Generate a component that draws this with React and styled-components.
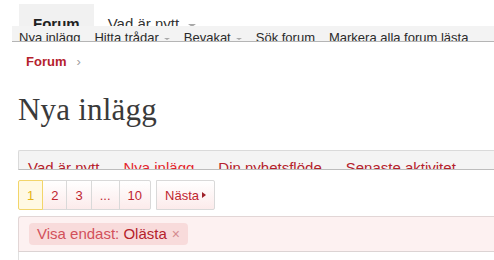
import React from 'react'
import styled, { createGlobalStyle } from 'styled-components'

const Global = createGlobalStyle`
  body {
    margin: 0;
    background: #fff;
    font-family: "Liberation Sans", Arial, sans-serif;
  }
`

const TopRow = styled.div`
  display: flex;
  align-items: flex-end;
  height: 26px;
  padding-left: 19px;
`
const TopTab = styled.div`
  height: 22px;
  box-sizing: border-box;
  padding: 11px 14px 0;
  background: ${p => (p.$active ? '#f1f1f1' : 'transparent')};
  font-size: 15px;
  line-height: 17px;
  font-weight: ${p => (p.$active ? 700 : 400)};
  color: ${p => (p.$active ? '#222' : '#333')};
  overflow: hidden;
  white-space: nowrap;
`
const Caret = styled.span`
  display: inline-block;
  width: 0;
  height: 0;
  border-left: ${p => p.$size}px solid transparent;
  border-right: ${p => p.$size}px solid transparent;
  border-top: ${p => p.$size - 1}px solid #a8a8a8;
  margin-left: ${p => p.$gap}px;
  vertical-align: middle;
`
const SubNav = styled.div`
  margin-left: 12px;
  height: 16px;
  box-sizing: border-box;
  border-bottom: 1px solid #b5b5b5;
  background: #f3f3f3;
  display: flex;
  gap: 14px;
  padding: 4px 0 0 7px;
  overflow: hidden;
  font-size: 13px;
  line-height: 15px;
  color: #2a2a2a;
  white-space: nowrap;
`
const Crumbs = styled.div`
  padding: 12px 0 0 26px;
  font-size: 13px;
  line-height: 16px;
  font-weight: 700;
  color: #b5222c;
  display: flex;
  gap: 10px;
`
const CrumbSep = styled.span`
  color: #a0a0a0;
  font-weight: 400;
`
const Title = styled.h1`
  margin: 22px 0 0 18px;
  font-family: "Liberation Serif", "Times New Roman", serif;
  font-weight: 400;
  font-size: 31px;
  line-height: 36px;
  color: #3a3a3a;
  letter-spacing: 0.2px;
`
const TabBar = styled.div`
  margin: 22px 0 0 18px;
  height: 20px;
  box-sizing: border-box;
  border-top: 1px solid #dadada;
  border-left: 1px solid #dadada;
  border-bottom: 1px solid #bdbdbd;
  border-top-left-radius: 2px;
  background: #f4f4f4;
  display: flex;
  gap: 24px;
  padding: 8px 0 0 9px;
  overflow: hidden;
  font-size: 15px;
  line-height: 17px;
  white-space: nowrap;
`
const Tab = styled.span`
  color: ${p => (p.$active ? '#e3262d' : '#b5222c')};
`
const Pager = styled.div`
  display: flex;
  gap: 5px;
  margin: 10px 0 0 18px;
`
const PageGroup = styled.div`
  display: flex;
`
const PageBtn = styled.div`
  height: 30px;
  box-sizing: border-box;
  padding: 0 8px;
  margin-left: -1px;
  display: flex;
  align-items: center;
  gap: 3px;
  font-size: 13px;
  border: 1px solid ${p => (p.$current ? '#f2d56a' : '#d9d9d9')};
  background: ${p => (p.$current ? '#fff9e3' : 'linear-gradient(#fff, #fcebeb)')};
  color: ${p => (p.$current ? '#e4b414' : '#bf2530')};
  position: relative;
  z-index: ${p => (p.$current ? 1 : 0)};
  &:first-child {
    margin-left: 0;
    border-radius: 2px 0 0 2px;
  }
  &:last-child {
    border-radius: 0 2px 2px 0;
  }
`
const NextArrow = styled.span`
  display: inline-block;
  width: 0;
  height: 0;
  border-top: 3px solid transparent;
  border-bottom: 3px solid transparent;
  border-left: 4px solid #9e1f28;
`
const FilterBox = styled.div`
  margin: 6px 0 0 18px;
  padding: 6px 10px;
  background: #fdf1f1;
  border-top: 1px solid #e2d6d6;
  border-left: 1px solid #e2d6d6;
  border-bottom: 1px solid #dcd3d3;
  border-top-left-radius: 3px;
  display: flex;
`
const Chip = styled.div`
  height: 22px;
  padding: 0 8px;
  border-radius: 4px;
  background: #f8dbdb;
  font-size: 15px;
  line-height: 22px;
  color: #d2505a;
  white-space: nowrap;
`
const ChipValue = styled.span`
  color: #b5222c;
`
const ChipClose = styled.span`
  color: #d48a8f;
  margin-left: 5px;
  font-size: 14px;
`
const ListBox = styled.div`
  margin-left: 18px;
  height: 12px;
  border-left: 1px solid #e0e0e0;
`

export default function App() {
  return (
    <>
      <Global />
      <TopRow>
        <TopTab $active>Forum</TopTab>
        <TopTab>Vad är nytt<Caret $size={4} $gap={9} /></TopTab>
      </TopRow>
      <SubNav>
        <span>Nya inlägg</span>
        <span>Hitta trådar<Caret $size={3} $gap={5} /></span>
        <span>Bevakat<Caret $size={3} $gap={5} /></span>
        <span>Sök forum</span>
        <span>Markera alla forum lästa</span>
      </SubNav>
      <Crumbs>
        <span>Forum</span>
        <CrumbSep>›</CrumbSep>
      </Crumbs>
      <Title>Nya inlägg</Title>
      <TabBar>
        <Tab>Vad är nytt</Tab>
        <Tab $active>Nya inlägg</Tab>
        <Tab>Din nyhetsflöde</Tab>
        <Tab>Senaste aktivitet</Tab>
      </TabBar>
      <Pager>
        <PageGroup>
          <PageBtn $current>1</PageBtn>
          <PageBtn>2</PageBtn>
          <PageBtn>3</PageBtn>
          <PageBtn>...</PageBtn>
          <PageBtn>10</PageBtn>
        </PageGroup>
        <PageGroup>
          <PageBtn>Nästa<NextArrow /></PageBtn>
        </PageGroup>
      </Pager>
      <FilterBox>
        <Chip>
          Visa endast: <ChipValue>Olästa</ChipValue>
          <ChipClose>×</ChipClose>
        </Chip>
      </FilterBox>
      <ListBox />
    </>
  )
}
